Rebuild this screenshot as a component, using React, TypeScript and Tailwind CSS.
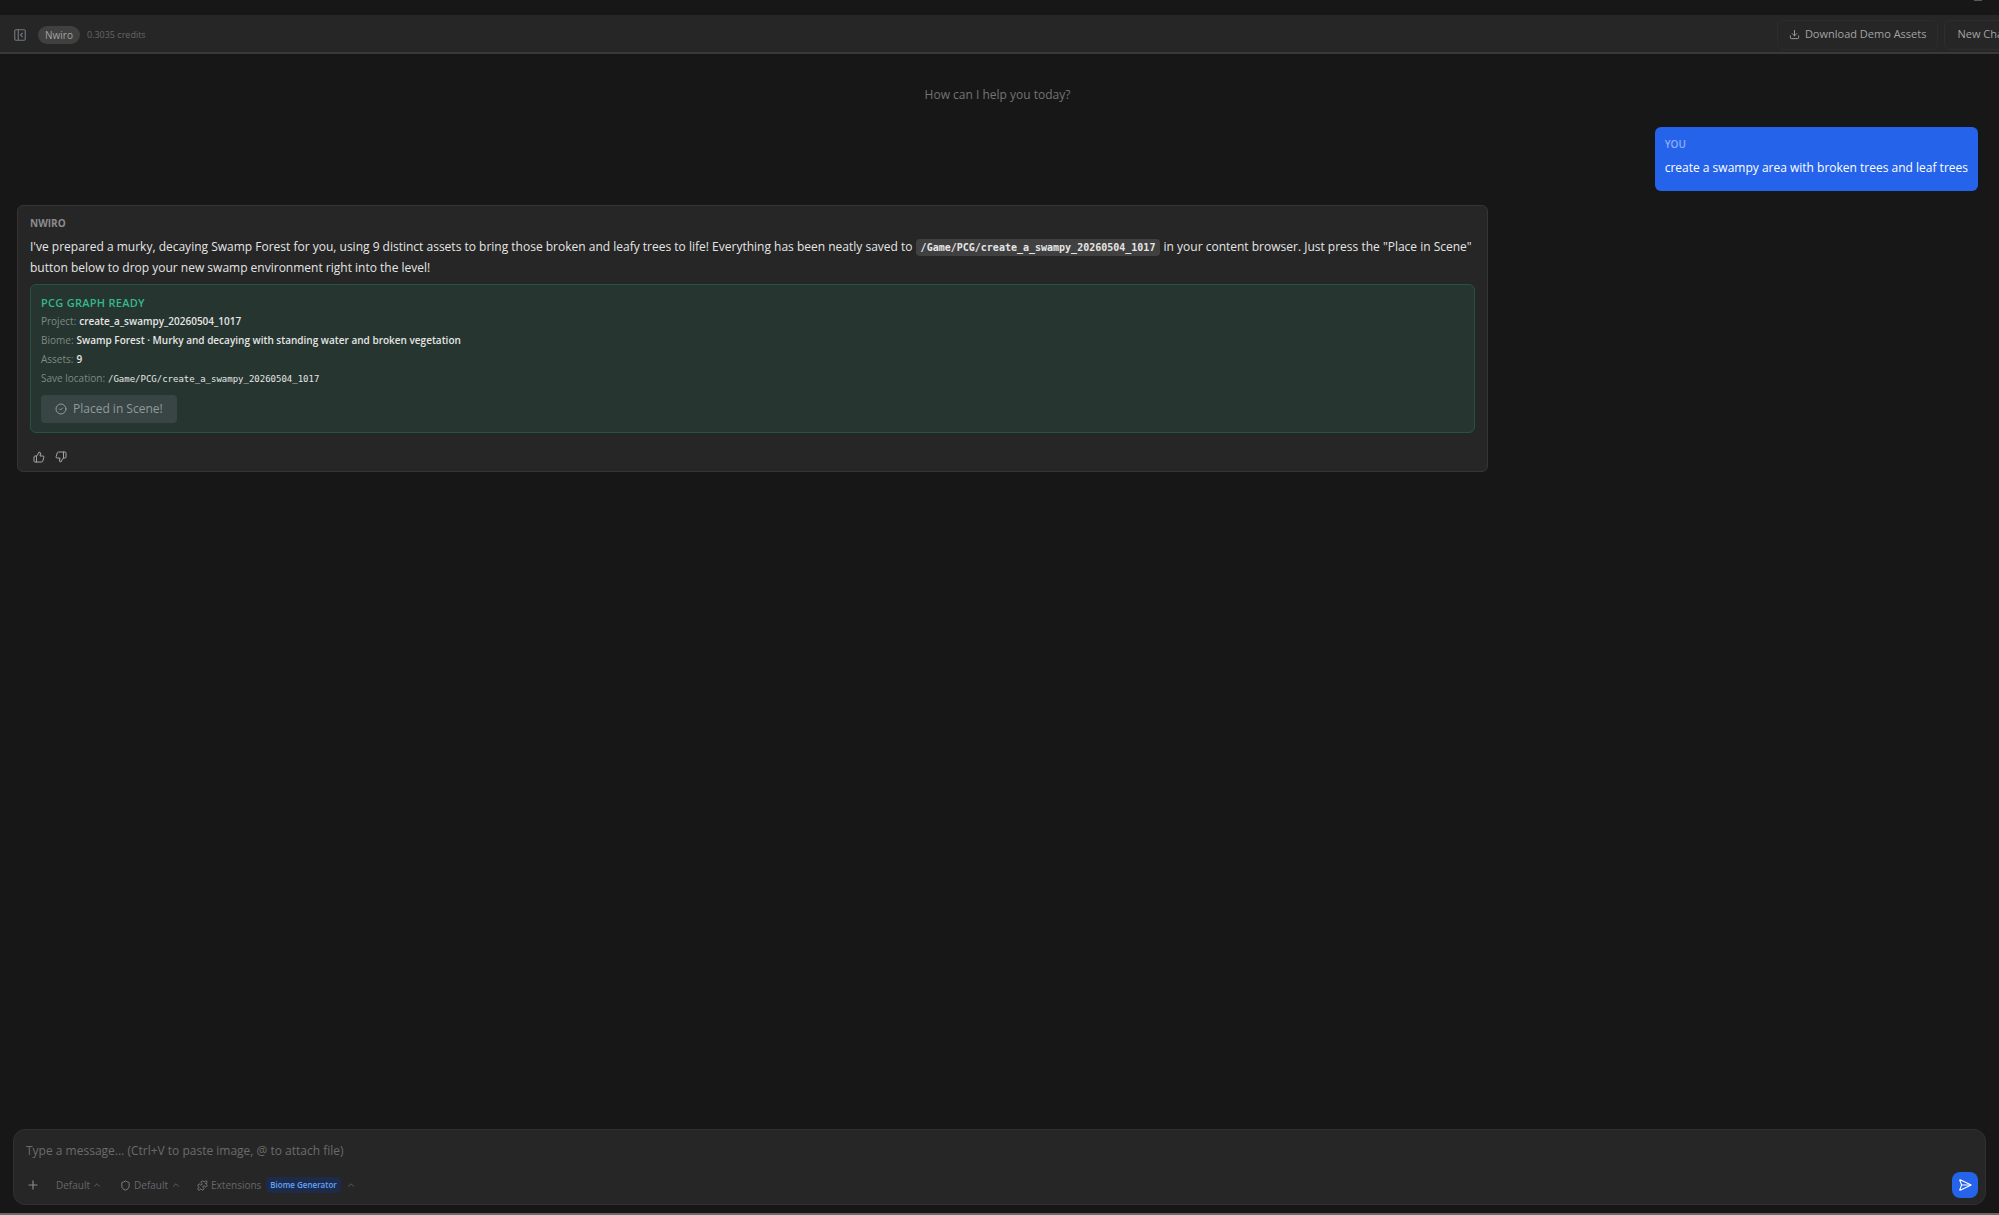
import { useState } from "react";
import type { ReactNode } from "react";
import {
  ChevronUp,
  CircleCheck,
  Download,
  PanelLeftClose,
  Plus,
  SendHorizontal,
  Shield,
  ThumbsDown,
  ThumbsUp,
} from "lucide-react";

const SAVE_PATH = "/Game/PCG/create_a_swampy_20260504_1017";

function PuzzleIcon() {
  return (
    <svg
      viewBox="0 0 24 24"
      className="size-[11px] text-[#858585]"
      fill="none"
      stroke="currentColor"
      strokeWidth={2}
      strokeLinecap="round"
      strokeLinejoin="round"
      aria-hidden="true"
    >
      <path d="M19.439 7.85c-.049.322.059.648.289.878l1.568 1.568c.47.47.706 1.087.706 1.704s-.235 1.233-.706 1.704l-1.611 1.611a.98.98 0 0 1-.837.276c-.47-.07-.802-.48-.968-.925a2.501 2.501 0 1 0-3.214 3.214c.446.166.855.497.925.968a.979.979 0 0 1-.276.837l-1.61 1.61a2.404 2.404 0 0 1-1.705.707 2.402 2.402 0 0 1-1.704-.706l-1.568-1.568a1.026 1.026 0 0 0-.877-.29c-.493.074-.84.504-1.02.968a2.5 2.5 0 1 1-3.237-3.237c.464-.18.894-.527.967-1.02a1.026 1.026 0 0 0-.289-.877l-1.568-1.568A2.402 2.402 0 0 1 1.998 12c0-.617.236-1.234.706-1.704L4.23 8.77c.24-.24.581-.353.917-.303.515.077.877.528 1.073 1.01a2.5 2.5 0 1 0 3.259-3.259c-.482-.196-.933-.558-1.01-1.073-.05-.336.062-.676.303-.917l1.525-1.525A2.402 2.402 0 0 1 12 1.998c.617 0 1.234.236 1.704.706l1.568 1.568c.23.23.556.338.877.29.493-.074.84-.504 1.02-.968a2.5 2.5 0 1 1 3.237 3.237c-.464.18-.894.527-.967 1.02Z" />
    </svg>
  );
}

function TitleStrip() {
  return (
    <div className="flex h-[15px] shrink-0 justify-end pr-[17px]">
      <div className="h-px w-2 bg-[#5a5a5a]" />
    </div>
  );
}

function Header() {
  return (
    <header className="flex h-[39px] shrink-0 items-center overflow-hidden border-b-2 border-[#393939] bg-[#262626] pt-[2px] pl-3">
      <button type="button" aria-label="Collapse sidebar" className="mr-[10px] p-px text-[#71757c]">
        <PanelLeftClose size={14} />
      </button>
      <span className="rounded-full bg-[#404040] px-[7px] text-[10px] leading-[18px] text-[#a3a3a3]">Nwiro</span>
      <span className="ml-[7px] text-[9px] text-[#63676c]">0.3035 credits</span>
      <div className="-mr-[21px] ml-auto flex shrink-0 gap-[6px] text-[11px] text-[#a3a3a3]">
        <button
          type="button"
          className="flex h-[30px] items-center gap-[5px] rounded-md border border-[#2c2c2c] px-[11px]"
        >
          <Download size={11} />
          Download Demo Assets
        </button>
        <button type="button" className="h-[30px] rounded-md border border-[#2e2e2e] px-3 whitespace-nowrap">
          New Chat
        </button>
      </div>
    </header>
  );
}

function Fact({ label, children }: { label: string; children: ReactNode }) {
  return (
    <div className="flex gap-[3px]">
      <dt className="text-[#7d8a86]">{label}:</dt>
      <dd className="font-semibold text-[#e5e5e5]">{children}</dd>
    </div>
  );
}

function GraphCard() {
  return (
    <section className="mt-[6px] rounded-md border border-[#245543] bg-[#263530] px-[10px] py-[9px]">
      <h2 className="text-[11px] leading-[18px] font-semibold tracking-wide text-[#34b98a]">PCG GRAPH READY</h2>
      <dl className="text-[10px] leading-[19px]">
        <Fact label="Project">create_a_swampy_20260504_1017</Fact>
        <Fact label="Biome">Swamp Forest · Murky and decaying with standing water and broken vegetation</Fact>
        <Fact label="Assets">9</Fact>
        <Fact label="Save location">
          <code className="font-['DejaVu_Sans_Mono',monospace] text-[9px] font-normal">{SAVE_PATH}</code>
        </Fact>
      </dl>
      <button
        type="button"
        className="mt-[6px] flex h-7 items-center gap-[6px] rounded bg-[#394545] px-[14px] text-xs font-medium text-[#8f9a99]"
      >
        <CircleCheck size={12} />
        Placed in Scene!
      </button>
    </section>
  );
}

function Conversation() {
  return (
    <main className="flex flex-1 flex-col pt-8 pr-[21px] pl-[17px]">
      <p className="text-center text-xs leading-[18px] text-[#737373]">How can I help you today?</p>
      <article className="mt-[23px] self-end rounded-md bg-[#2563eb] px-[10px] pt-2 pb-3">
        <h2 className="text-[10px] leading-[18px] font-semibold text-[#8fb0f5]">YOU</h2>
        <p className="mt-1 text-xs leading-[22px] text-white">create a swampy area with broken trees and leaf trees</p>
      </article>
      <article className="mt-[14px] w-3/4 rounded-md border border-[#353535] bg-[#262626] px-3 py-2">
        <h2 className="text-[10px] leading-[18px] font-bold text-[#8c8c8c]">NWIRO</h2>
        <p className="mt-1 text-xs leading-[21px] text-[#e5e5e5]">
          I've prepared a murky, decaying Swamp Forest for you, using 9 distinct assets to bring those broken and leafy
          trees to life! Everything has been neatly saved to{" "}
          <code className="rounded bg-[#404040] px-[5px] py-[3px] font-['DejaVu_Sans_Mono',monospace] text-[10px] leading-none font-bold">
            {SAVE_PATH}
          </code>{" "}
          in your content browser. Just press the "Place in Scene" button below to drop your new swamp environment right
          into the level!
        </p>
        <GraphCard />
        <div className="mt-[18px] flex gap-[10px] px-[3px] text-[#a3a3a3]">
          <button type="button" aria-label="Good response">
            <ThumbsUp size={12} />
          </button>
          <button type="button" aria-label="Bad response">
            <ThumbsDown size={12} />
          </button>
        </div>
      </article>
    </main>
  );
}

function Composer() {
  const [message, setMessage] = useState("");
  return (
    <form
      className="mx-[13px] mb-2 rounded-xl border border-[#303030] bg-[#262626] px-[7px] pt-[9px] pb-[6px]"
      onSubmit={(event) => event.preventDefault()}
    >
      <input
        aria-label="Message"
        className="block h-[22px] w-full bg-transparent px-[5px] text-xs text-[#e5e5e5] outline-none placeholder:text-[#6b6b6b]"
        placeholder="Type a message... (Ctrl+V to paste image, @ to attach file)"
        value={message}
        onChange={(event) => setMessage(event.target.value)}
      />
      <div className="mt-[11px] flex items-center text-[10px] text-[#64686d]">
        <button type="button" aria-label="Add attachment" className="p-[5px] text-[#8a8a8a]">
          <Plus size={14} />
        </button>
        <button type="button" className="ml-[11px] flex items-center gap-[2px]">
          Default
          <ChevronUp size={10} />
        </button>
        <button type="button" className="ml-[18px] flex items-center gap-[3px]">
          <Shield size={11} className="text-[#858585]" />
          Default
          <ChevronUp size={10} />
        </button>
        <button type="button" className="ml-4 flex items-center gap-[3px]">
          <PuzzleIcon />
          Extensions
          <span className="mx-[2px] rounded bg-[#1e2a4a] px-1 text-[8px] leading-4 font-semibold text-[#60a5fa]">
            Biome Generator
          </span>
          <ChevronUp size={10} />
        </button>
        <button
          type="submit"
          aria-label="Send message"
          className="ml-auto grid size-[26px] place-items-center rounded-lg bg-[#2563eb] text-white"
        >
          <SendHorizontal size={14} />
        </button>
      </div>
    </form>
  );
}

export default function App() {
  return (
    <div className="flex min-h-screen flex-col border-b-2 border-[#6a6a6a] bg-[#171717] font-['Open_Sans',sans-serif] antialiased">
      <TitleStrip />
      <Header />
      <Conversation />
      <Composer />
    </div>
  );
}
